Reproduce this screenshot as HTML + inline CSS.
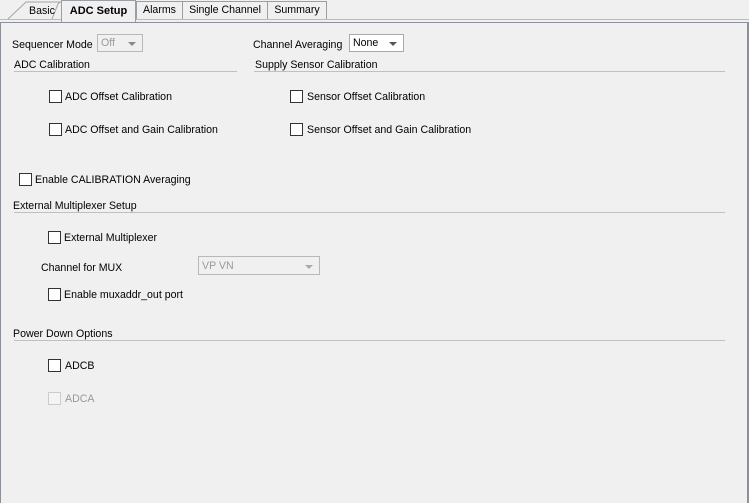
<!DOCTYPE html>
<html><head><style>
body{margin:0;width:749px;height:497px;background:#f0f0f0;position:relative;overflow:hidden;font-family:"Liberation Sans","DejaVu Sans",sans-serif;font-size:10.6px;color:#000}
.a{position:absolute;white-space:nowrap}
.t{margin-top:1px}
.cb{position:absolute;width:11px;height:11px;border:1px solid #333;background:#fff}
.cbd{border-color:#ccc;background:#f4f4f4}
.ln{position:absolute;height:1px;background:#c0c0c0}
.tab{position:absolute;top:1px;height:17px;border:1px solid #9a9fa6;border-bottom:none;background:#f0f0f0;text-align:center;line-height:17px;font-size:10.6px}
.dd{position:absolute;border:1px solid #b8b8b8;background:#f0f0f0;height:18px;line-height:17px;padding-left:3px;box-sizing:border-box}
.ar{position:absolute;right:6px;top:7px;width:0;height:0;border-left:4px solid transparent;border-right:4px solid transparent;border-top:4px solid #888}
</style></head><body>
<div class="ln" style="left:0;top:19px;width:749px;background:#b8bcc2"></div>
<svg class="a" style="left:0;top:0" width="62" height="22"><path d="M8 19 L26 2 L60 2" fill="none" stroke="#a0a4aa"/><path d="M62 2 L60 2 L58 4 L52 19" fill="none" stroke="#a0a4aa"/></svg>
<div class="a" style="left:29px;top:5px">Basic</div>
<div class="tab" style="left:61px;width:73px;top:0px;height:21px;font-weight:bold;line-height:20px;font-size:11px">ADC Setup</div>
<div class="tab" style="left:136px;width:45px">Alarms</div>
<div class="tab" style="left:182px;width:84px">Single Channel</div>
<div class="tab" style="left:267px;width:58px">Summary</div>
<div class="a" style="left:0;top:22px;width:746px;height:480px;border-top:1px solid #8c9199;border-left:1px solid #8c9199;border-right:2px solid #8c9199"></div>

<div class="a" style="left:12px;top:39px">Sequencer Mode</div>
<div class="dd" style="left:97px;top:34px;width:46px;color:#999">Off<div class="ar"></div></div>
<div class="a" style="left:253px;top:39px">Channel Averaging</div>
<div class="dd" style="left:349px;top:34px;width:55px;background:#fff;border-color:#aaa">None<div class="ar" style="border-top-color:#555"></div></div>

<div class="a" style="left:14px;top:59px">ADC Calibration</div>
<div class="ln" style="left:14px;top:71px;width:223px"></div>
<div class="a" style="left:255px;top:59px">Supply Sensor Calibration</div>
<div class="ln" style="left:254px;top:71px;width:471px"></div>

<div class="cb" style="left:49px;top:90px"></div><div class="a" style="left:65px;top:91px">ADC Offset Calibration</div>
<div class="cb" style="left:49px;top:123px"></div><div class="a" style="left:65px;top:124px">ADC Offset and Gain Calibration</div>
<div class="cb" style="left:290px;top:90px"></div><div class="a" style="left:307px;top:91px">Sensor Offset Calibration</div>
<div class="cb" style="left:290px;top:123px"></div><div class="a" style="left:307px;top:124px">Sensor Offset and Gain Calibration</div>

<div class="cb" style="left:19px;top:173px"></div><div class="a" style="left:35px;top:174px">Enable CALIBRATION Averaging</div>
<div class="a" style="left:13px;top:200px">External Multiplexer Setup</div>
<div class="ln" style="left:14px;top:212px;width:711px"></div>

<div class="cb" style="left:48px;top:231px"></div><div class="a" style="left:64px;top:232px">External Multiplexer</div>
<div class="a" style="left:41px;top:262px">Channel for MUX</div>
<div class="dd" style="left:198px;top:256px;width:122px;height:19px;color:#999;line-height:18px">VP VN<div class="ar" style="top:8px;border-top-color:#aaa"></div></div>
<div class="cb" style="left:48px;top:288px"></div><div class="a" style="left:64px;top:289px">Enable muxaddr_out port</div>

<div class="a" style="left:13px;top:328px">Power Down Options</div>
<div class="ln" style="left:14px;top:340px;width:711px"></div>
<div class="cb" style="left:48px;top:359px"></div><div class="a" style="left:65px;top:360px">ADCB</div>
<div class="cb cbd" style="left:48px;top:392px"></div><div class="a" style="left:65px;top:393px;color:#999">ADCA</div>
</body></html>
